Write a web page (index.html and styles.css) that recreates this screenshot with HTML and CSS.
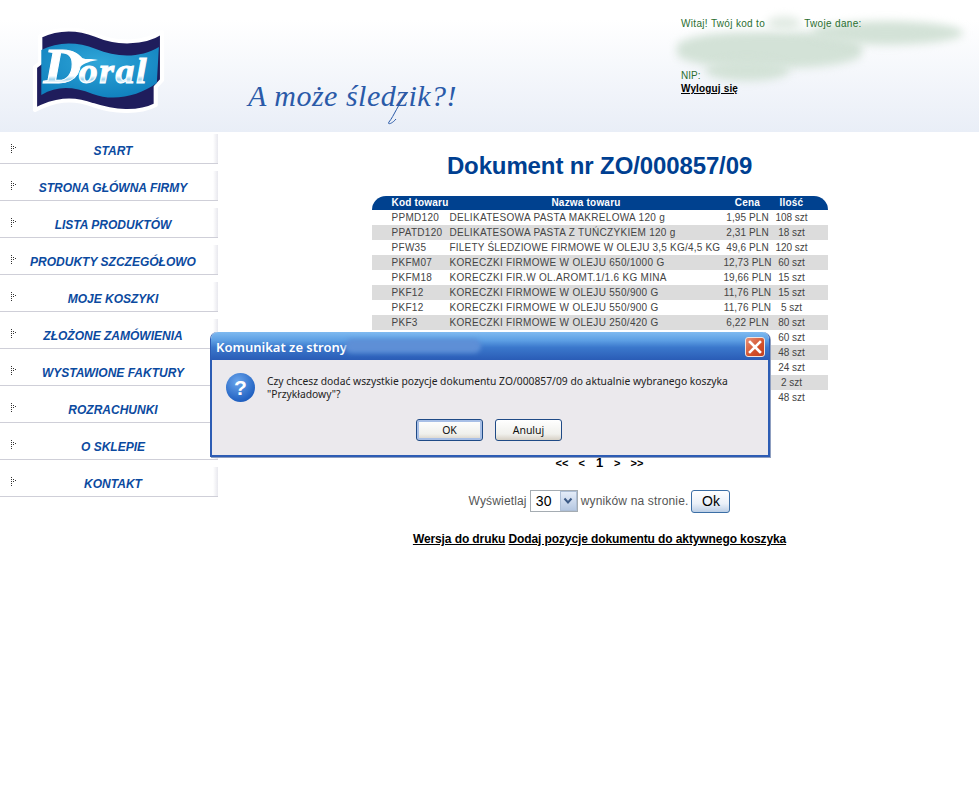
FILE: index.html
```html
<!DOCTYPE html>
<html lang="pl">
<head>
<meta charset="utf-8">
<title>Dokument nr ZO/000857/09</title>
<link rel="stylesheet" href="styles.css">
</head>
<body>
<header class="header">
  <svg class="logo" width="140" height="100" viewBox="29 24 140 100">
    <defs>
      <radialGradient id="blue" cx="0.5" cy="0.35" r="0.7"><stop offset="0" stop-color="#2fa6d8"/><stop offset="1" stop-color="#0f7fbd"/></radialGradient>
      <linearGradient id="stripe" x1="0" y1="0" x2="0" y2="1"><stop offset="0" stop-color="#fff"/><stop offset="0.68" stop-color="#fff"/><stop offset="0.74" stop-color="#9fd4ee"/><stop offset="0.8" stop-color="#fff"/><stop offset="0.86" stop-color="#a8d8f0"/><stop offset="0.92" stop-color="#fff"/><stop offset="1" stop-color="#fff"/></linearGradient>
    </defs>
    <g transform="translate(-3.85 0) scale(1.05 1)">
      <path d="M42 36 C58 28 76 27 95 35 C115 44 140 44 158 32 L158 80 L152 87 L152 105 C135 114 112 112 92 105 C72 97 55 100 37 110 L37 67 L42 63 Z" fill="#1f1d5c" stroke="#fff" stroke-width="4" stroke-linejoin="round"/>
      <path d="M43 50 C58 42 76 41 95 49 C115 58 138 58 155 47 L153 83 C136 96 112 102 92 94 C72 86 58 86 43 95 Z" fill="url(#blue)"/>
      <text x="45" y="83" class="logo-text" fill="url(#stripe)" stroke="#fff" stroke-width="1"><tspan class="logo-cap">D</tspan><tspan dx="-4">oral</tspan></text>
      <path d="M66 52 C72 50 78 53 82 58 C86 60 90 58 97 60 C90 61 84 63 80 67 Z" fill="#fff"/>
    </g>
  </svg>
  <div class="slogan">A może śledzik?!<svg class="slogan-swash" width="30" height="40" viewBox="0 0 30 40"><path d="M22 6 C12 18 8 30 3 36 C1 39 6 38 10 33" fill="none" stroke="#2a5aa8" stroke-width="1"/></svg></div>
  <div class="user">
    <div class="user-greeting"><span>Witaj! Twój kod to</span><span class="user-second">Twoje dane:</span></div>
    <div class="user-nip">NIP:</div>
    <a class="logout" href="#">Wyloguj się</a>
    <span class="smudge smudge-main"></span>
    <span class="smudge smudge-right"></span>
    <span class="smudge smudge-code"></span>
    <span class="smudge smudge-nip"></span>
  </div>
</header>

<div class="page">
  <nav class="sidebar">
    <a class="nav-item" href="#"><svg class="nav-arrow" width="8" height="10" viewBox="0 0 8 10"><path d="M1 1h1v1H1zM1 3h1v1H1zM3 3h1v1H3zM1 5h1v1H1zM5 4h1v1H5zM3 5h1v1H3zM1 7h1v1H1zM1 9h1v1H1z" fill="#333"/></svg><span>START</span></a>
    <a class="nav-item" href="#"><svg class="nav-arrow" width="8" height="10" viewBox="0 0 8 10"><path d="M1 1h1v1H1zM1 3h1v1H1zM3 3h1v1H3zM1 5h1v1H1zM5 4h1v1H5zM3 5h1v1H3zM1 7h1v1H1zM1 9h1v1H1z" fill="#333"/></svg><span>STRONA GŁÓWNA FIRMY</span></a>
    <a class="nav-item" href="#"><svg class="nav-arrow" width="8" height="10" viewBox="0 0 8 10"><path d="M1 1h1v1H1zM1 3h1v1H1zM3 3h1v1H3zM1 5h1v1H1zM5 4h1v1H5zM3 5h1v1H3zM1 7h1v1H1zM1 9h1v1H1z" fill="#333"/></svg><span>LISTA PRODUKTÓW</span></a>
    <a class="nav-item" href="#"><svg class="nav-arrow" width="8" height="10" viewBox="0 0 8 10"><path d="M1 1h1v1H1zM1 3h1v1H1zM3 3h1v1H3zM1 5h1v1H1zM5 4h1v1H5zM3 5h1v1H3zM1 7h1v1H1zM1 9h1v1H1z" fill="#333"/></svg><span>PRODUKTY SZCZEGÓŁOWO</span></a>
    <a class="nav-item" href="#"><svg class="nav-arrow" width="8" height="10" viewBox="0 0 8 10"><path d="M1 1h1v1H1zM1 3h1v1H1zM3 3h1v1H3zM1 5h1v1H1zM5 4h1v1H5zM3 5h1v1H3zM1 7h1v1H1zM1 9h1v1H1z" fill="#333"/></svg><span>MOJE KOSZYKI</span></a>
    <a class="nav-item" href="#"><svg class="nav-arrow" width="8" height="10" viewBox="0 0 8 10"><path d="M1 1h1v1H1zM1 3h1v1H1zM3 3h1v1H3zM1 5h1v1H1zM5 4h1v1H5zM3 5h1v1H3zM1 7h1v1H1zM1 9h1v1H1z" fill="#333"/></svg><span>ZŁOŻONE ZAMÓWIENIA</span></a>
    <a class="nav-item" href="#"><svg class="nav-arrow" width="8" height="10" viewBox="0 0 8 10"><path d="M1 1h1v1H1zM1 3h1v1H1zM3 3h1v1H3zM1 5h1v1H1zM5 4h1v1H5zM3 5h1v1H3zM1 7h1v1H1zM1 9h1v1H1z" fill="#333"/></svg><span>WYSTAWIONE FAKTURY</span></a>
    <a class="nav-item" href="#"><svg class="nav-arrow" width="8" height="10" viewBox="0 0 8 10"><path d="M1 1h1v1H1zM1 3h1v1H1zM3 3h1v1H3zM1 5h1v1H1zM5 4h1v1H5zM3 5h1v1H3zM1 7h1v1H1zM1 9h1v1H1z" fill="#333"/></svg><span>ROZRACHUNKI</span></a>
    <a class="nav-item" href="#"><svg class="nav-arrow" width="8" height="10" viewBox="0 0 8 10"><path d="M1 1h1v1H1zM1 3h1v1H1zM3 3h1v1H3zM1 5h1v1H1zM5 4h1v1H5zM3 5h1v1H3zM1 7h1v1H1zM1 9h1v1H1z" fill="#333"/></svg><span>O SKLEPIE</span></a>
    <a class="nav-item" href="#"><svg class="nav-arrow" width="8" height="10" viewBox="0 0 8 10"><path d="M1 1h1v1H1zM1 3h1v1H1zM3 3h1v1H3zM1 5h1v1H1zM5 4h1v1H5zM3 5h1v1H3zM1 7h1v1H1zM1 9h1v1H1z" fill="#333"/></svg><span>KONTAKT</span></a>
  </nav>

  <main class="main">
    <h1 class="title">Dokument nr ZO/000857/09</h1>
    <table class="items">
      <thead>
        <tr><th class="c-code">Kod towaru</th><th class="c-name">Nazwa towaru</th><th class="c-price">Cena</th><th class="c-qty">Ilość</th></tr>
      </thead>
      <tbody>
        <tr><td class="c-code">PPMD120</td><td class="c-name">DELIKATESOWA PASTA MAKRELOWA 120 g</td><td class="c-price">1,95 PLN</td><td class="c-qty">108 szt</td></tr>
        <tr><td class="c-code">PPATD120</td><td class="c-name">DELIKATESOWA PASTA Z TUŃCZYKIEM 120 g</td><td class="c-price">2,31 PLN</td><td class="c-qty">18 szt</td></tr>
        <tr><td class="c-code">PFW35</td><td class="c-name c-tight">FILETY ŚLEDZIOWE FIRMOWE W OLEJU 3,5 KG/4,5 KG</td><td class="c-price">49,6 PLN</td><td class="c-qty">120 szt</td></tr>
        <tr><td class="c-code">PKFM07</td><td class="c-name">KORECZKI FIRMOWE W OLEJU 650/1000 G</td><td class="c-price">12,73 PLN</td><td class="c-qty">60 szt</td></tr>
        <tr><td class="c-code">PKFM18</td><td class="c-name">KORECZKI FIR.W OL.AROMT.1/1.6 KG MINA</td><td class="c-price">19,66 PLN</td><td class="c-qty">15 szt</td></tr>
        <tr><td class="c-code">PKF12</td><td class="c-name">KORECZKI FIRMOWE W OLEJU 550/900 G</td><td class="c-price">11,76 PLN</td><td class="c-qty">15 szt</td></tr>
        <tr><td class="c-code">PKF12</td><td class="c-name">KORECZKI FIRMOWE W OLEJU 550/900 G</td><td class="c-price">11,76 PLN</td><td class="c-qty">5 szt</td></tr>
        <tr><td class="c-code">PKF3</td><td class="c-name">KORECZKI FIRMOWE W OLEJU 250/420 G</td><td class="c-price">6,22 PLN</td><td class="c-qty">80 szt</td></tr>
        <tr><td class="c-code"></td><td class="c-name"></td><td class="c-price"></td><td class="c-qty">60 szt</td></tr>
        <tr><td class="c-code"></td><td class="c-name"></td><td class="c-price"></td><td class="c-qty">48 szt</td></tr>
        <tr><td class="c-code"></td><td class="c-name"></td><td class="c-price"></td><td class="c-qty">24 szt</td></tr>
        <tr><td class="c-code"></td><td class="c-name"></td><td class="c-price"></td><td class="c-qty">2 szt</td></tr>
        <tr><td class="c-code"></td><td class="c-name"></td><td class="c-price"></td><td class="c-qty">48 szt</td></tr>
      </tbody>
    </table>
    <div class="pager"><a href="#">&lt;&lt;</a><a href="#">&lt;</a><b>1</b><a href="#">&gt;</a><a href="#">&gt;&gt;</a></div>
    <form class="perpage">
      <span>Wyświetlaj</span>
      <span class="select">30<span class="select-btn"><svg width="10" height="8" viewBox="0 0 10 8"><path d="M1.5 1.5 5 5.5 8.5 1.5" fill="none" stroke="#3c5a86" stroke-width="2"/></svg></span></span>
      <span>wyników na stronie.</span>
      <button class="ok-btn" type="button">Ok</button>
    </form>
    <div class="links"><a href="#">Wersja do druku</a> <a href="#">Dodaj pozycje dokumentu do aktywnego koszyka</a></div>
  </main>
</div>

<div class="dialog" role="alertdialog">
  <div class="dialog-title">
    <span>Komunikat ze strony</span>
    <span class="title-smudge"></span>
    <span class="dialog-close"><svg width="14" height="14" viewBox="0 0 14 14"><path d="M2 2 12 12M12 2 2 12" stroke="#fff" stroke-width="2.6" stroke-linecap="square"/></svg></span>
  </div>
  <div class="dialog-body">
    <div class="dialog-message">
      <span class="question">?</span>
      <p>Czy chcesz dodać wszystkie pozycje dokumentu ZO/000857/09 do aktualnie wybranego koszyka<br>"Przykładowy"?</p>
    </div>
    <div class="dialog-actions">
      <button class="xp-btn xp-default" type="button">OK</button>
      <button class="xp-btn" type="button">Anuluj</button>
    </div>
  </div>
</div>
</body>
</html>
```
FILE: styles.css
```css
* { box-sizing: border-box; }
html, body { margin: 0; padding: 0; }
body {
  background: #fff;
  font-family: "Liberation Sans", Arial, sans-serif;
  color: #333;
  min-height: 793px;
  overflow: hidden;
}

/* Header */
.header {
  height: 132px;
  display: flex;
  background: linear-gradient(#fff 0, #fff 20px, #e9eef7 100%);
  position: relative;
}
.logo { margin: 24px 0 0 29px; flex: none; }
.logo-text { font-family: "Liberation Serif", serif; font-weight: bold; font-style: italic; font-size: 36px; letter-spacing: 1.5px; }
.logo-cap { font-size: 50px; }
.slogan {
  position: relative;
  flex: none;
  width: 433px;
  margin-left: 79px;
  padding-top: 79px;
  font-family: "Liberation Serif", serif;
  font-style: italic;
  font-size: 30px;
  color: #2a5aa8;
  letter-spacing: 0.5px;
  white-space: nowrap;
}
.slogan-swash { position: absolute; left: 138px; top: 86px; }
.user {
  position: relative;
  padding-top: 17px;
  font-size: 10px;
  color: #2a6e30;
  line-height: 13px;
}
.user-greeting { display: flex; letter-spacing: 0.33px; position: relative; z-index: 1; }
.user-second { margin-left: 39px; }
.user-nip { margin-top: 39px; position: relative; z-index: 1; }
.logout { color: #000; font-weight: bold; font-size: 10px; letter-spacing: 0.15px; display: block; position: relative; z-index: 1; }
.smudge { position: absolute; background: #d3e2d7; filter: blur(4px); border-radius: 50%; }
.smudge-main { left: -4px; top: 32px; width: 185px; height: 36px; border-radius: 40%; }
.smudge-right { left: 130px; top: 21px; width: 152px; height: 24px; }
.smudge-code { left: 86px; top: 16px; width: 34px; height: 15px; background: #e2ebe4; }
.smudge-nip { left: 24px; top: 60px; width: 85px; height: 21px; }

/* Layout */
.page { display: flex; }

/* Sidebar */
.sidebar { width: 218px; flex: none; padding-top: 2px; }
.nav-item {
  position: relative;
  display: flex;
  height: 30px;
  margin-bottom: 7px;
  align-items: center;
  justify-content: center;
  padding: 5px 0 0 8px;
  border-bottom: 1px solid #cfcfd8;
  background: linear-gradient(90deg, #fff 0, #fff 213px, #e8e8ee 218px);
  font-size: 12px;
  font-weight: bold;
  font-style: italic;
  color: #0b4aa0;
  text-decoration: none;
}
.nav-arrow { position: absolute; left: 10px; top: 9px; }

/* Main */
.main { flex: 1; display: flex; flex-direction: column; align-items: center; padding-left: 2px; }
.title { margin: 20px 0 0; font-size: 24px; line-height: 28px; font-weight: bold; color: #003f91; letter-spacing: -0.12px; }
.items {
  width: 456px;
  margin: 16px 0 0;
  border-collapse: collapse;
  table-layout: fixed;
  font-size: 10px;
  letter-spacing: 0.3px;
}
.items th {
  height: 14px;
  padding: 0;
  background: #00418f;
  color: #fff;
  font-size: 10px;
  font-weight: bold;
  line-height: 14px;
  letter-spacing: 0.2px;
}
.items th:first-child { border-top-left-radius: 14px; }
.items th:last-child { border-top-right-radius: 14px; }
.items td { height: 15px; padding: 0; color: #444; line-height: 15px; white-space: nowrap; }
.items tbody tr:nth-child(even) td { background: #dcdcdc; }
.items .c-code { width: 78px; padding-left: 20px; text-align: left; }
.items .c-name { width: 273px; text-align: left; }
.items td.c-tight { letter-spacing: 0.2px; }
.items th.c-name { text-align: center; }
.items .c-price { width: 52px; text-align: center; padding-right: 2px; }
.items td.c-price { letter-spacing: 0.1px; }
.items .c-qty { width: 53px; text-align: center; padding-right: 19px; }
.items td.c-qty { letter-spacing: 0; }

.pager { margin-top: 51px; display: flex; gap: 10px; align-items: center; font-size: 11px; font-weight: bold; line-height: 14px; height: 14px; }
.pager a { color: #000; text-decoration: none; }
.pager b { font-size: 13px; color: #000; margin: 0 1px; }

.perpage { margin-top: 19px; display: flex; align-items: center; gap: 3px; font-size: 12px; color: #555; height: 24px; letter-spacing: 0.16px; }
.select {
  position: relative;
  width: 48px;
  height: 22px;
  padding: 0 0 0 5px;
  border: 1px solid #a5acb2;
  background: #fff;
  color: #000;
  font-size: 14px;
  line-height: 20px;
}
.select-btn {
  position: absolute;
  right: 0;
  top: 0;
  width: 17px;
  height: 20px;
  border: 1px solid #aebfd6;
  background: linear-gradient(#e4ecf8, #b6c8e2);
  display: flex;
  align-items: center;
  justify-content: center;
}
.ok-btn {
  width: 39px;
  height: 23px;
  padding: 0;
  border: 1px solid #3b6ea5;
  border-radius: 3px;
  background: linear-gradient(#fff, #eaf0f8 60%, #bccfe6);
  font: 14px "Liberation Sans", Arial, sans-serif;
  color: #000;
}
.links { margin-top: 18px; font-size: 12px; font-weight: bold; line-height: 16px; color: #000; letter-spacing: -0.1px; }
.links a { color: #000; }

/* Dialog */
.dialog {
  position: absolute;
  left: 210px;
  top: 332px;
  width: 560px;
  height: 125px;
  border: 1px solid #2d5cb4;
  border-top: 0;
  border-radius: 7px 7px 0 0;
  box-shadow: 1px 1px 0 #8f9fc0;
  background: #ebe9ed;
  display: flex;
  flex-direction: column;
  font-family: "Noto Sans", Tahoma, sans-serif;
}
.dialog-title {
  position: relative;
  flex: none;
  height: 28px;
  padding: 6px 0 0 5px;
  border-radius: 7px 7px 0 0;
  background: linear-gradient(#7fbaf0 0, #5d9fe4 30%, #3b78cc 55%, #2a5cb6 100%);
  color: #fff;
  font-size: 13px;
  font-weight: 600;
  line-height: 18px;
}
.title-smudge {
  position: absolute;
  left: 134px;
  top: 7px;
  width: 136px;
  height: 14px;
  border-radius: 7px;
  background: #5e8fd6;
  filter: blur(2px);
}
.dialog-close {
  position: absolute;
  right: 4px;
  top: 5px;
  width: 20px;
  height: 20px;
  border: 1px solid #f0e4e0;
  border-radius: 3px;
  background: linear-gradient(135deg, #e89078, #d2502a 60%, #c04020);
  display: flex;
  align-items: center;
  justify-content: center;
}
.dialog-body {
  flex: 1;
  border: 1px solid #2d5cb4;
  border-width: 0 1px 1px;
  padding: 13px 16px 0 14px;
}
.dialog-message { display: flex; gap: 12px; }
.dialog-message p { margin: 2px 0 0; font-size: 10.3px; line-height: 13px; color: #222; white-space: nowrap; }
.question {
  flex: none;
  width: 29px;
  height: 29px;
  border-radius: 50%;
  background: radial-gradient(circle at 40% 30%, #6ba6ec, #1f5fc0 75%, #174a9c);
  color: #fff;
  font: bold 21px/29px "Liberation Sans", Arial, sans-serif;
  text-align: center;
}
.dialog-actions { display: flex; justify-content: center; gap: 12px; margin-top: 17px; }
.xp-btn {
  width: 67px;
  height: 22px;
  padding: 0;
  border: 1px solid #1f4a86;
  border-radius: 3px;
  background: linear-gradient(#fff, #f0f0ec 70%, #d6d0c5);
  font: 10.5px "Noto Sans", Tahoma, sans-serif;
  color: #111;
}
.xp-default { box-shadow: inset 0 0 0 2px #a8bfe6; }
```
